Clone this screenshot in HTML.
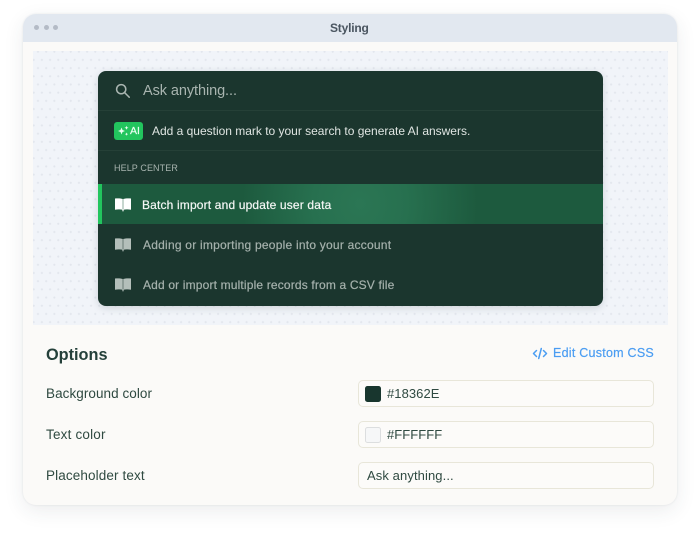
<!DOCTYPE html>
<html><head><meta charset="utf-8">
<style>
html,body{margin:0;padding:0;background:#fff;width:700px;height:537px;overflow:hidden}
body{position:relative;font-family:"Liberation Sans",sans-serif}
.a{position:absolute;white-space:nowrap}
.card{left:23px;top:14px;width:654px;height:491px;border-radius:13px;background:#fbfaf8;box-shadow:0 6px 20px rgba(40,50,70,.09),0 0 2px rgba(40,50,70,.1);overflow:hidden}
.hdr{left:23px;top:14px;width:654px;height:27.5px;background:#e2e8f0;border-radius:13px 13px 0 0}
.dot{width:5px;height:5px;border-radius:50%;background:#b4bbc6;top:25.3px}
.pat{left:33px;top:51px;width:635px;height:274px;background-color:#f1f4f9;
background-image:radial-gradient(circle,#e2e6ed .9px,transparent 1.2px),radial-gradient(circle,#e2e6ed .9px,transparent 1.2px);
background-size:8.2px 16.4px;background-position:.9px -7.5px,-3.4px .7px}
.panel{left:98px;top:71px;width:505px;height:235px;background:#1b362e;border-radius:8px;box-shadow:0 2px 8px rgba(20,40,50,.15);overflow:hidden}
.ln{left:98px;width:505px;height:1px;background:#254037}
.sel{left:98px;top:184px;width:505px;height:40px;background:radial-gradient(ellipse 118px 130px at 262px 20px,#2b7654 0%,#27704f 40%,#1d5a3e 100%) #1d5a3e}
.bar{left:98px;top:184px;width:3.5px;height:40px;background:#22c55e}
.t{font-size:12px;line-height:16px;color:#dfe5e2}
.m{-webkit-text-stroke:.2px currentColor}
.lb{font-size:13.5px;line-height:18px;color:#2f4a41}
.box{left:358px;width:294px;height:25px;border:1px solid #e8e6d9;border-radius:5px;background:#fcfbf9}
.sw{left:364.5px;width:16px;height:16px;border-radius:2.5px}
.val{font-size:13px;line-height:18px;color:#2f4a41}
</style></head><body>
<div class="a card"></div>
<div class="a hdr"></div>
<div class="a dot" style="left:34.400px"></div><div class="a dot" style="left:43.800px"></div><div class="a dot" style="left:53.200px"></div>
<div class="a" style="left:330px;top:20px;font-size:12px;line-height:16px;font-weight:bold;color:#4a5560;letter-spacing:-.2px">Styling</div>
<div class="a pat"></div>
<div class="a panel"></div>
<svg class="a" style="left:113.500px;top:81.500px" width="18" height="18" viewBox="0 0 18 18" fill="none" stroke="#aab6b1" stroke-width="1.5" stroke-linecap="round"><circle cx="7.200" cy="7.200" r="4.600"/><path d="M10.700 10.700L15.200 15.200"/></svg>
<div class="a" style="left:143px;top:81.500px;font-size:14.500px;line-height:18px;color:#a9b5b0;letter-spacing:-.08px">Ask anything...</div>
<div class="a ln" style="top:110px"></div>
<div class="a" style="left:114px;top:122px;width:29px;height:18px;border-radius:3px;background:#22c55e"></div>
<svg class="a" style="left:117px;top:125px" width="13" height="12" viewBox="0 0 13 12" fill="#eafff2"><path d="M4.500 2.500L5.500 5L8 6L5.500 7L4.500 9.500L3.500 7L1 6L3.500 5Z"/><path d="M9.500 .8L10.100 2.200L11.500 2.800L10.100 3.400L9.500 4.800L8.900 3.400L7.500 2.800L8.900 2.200Z"/><path d="M9.500 7.500L10 8.600L11.100 9.100L10 9.600L9.500 10.700L9 9.600L7.900 9.100L9 8.600Z"/></svg>
<div class="a" style="left:130px;top:124px;font-size:10.500px;line-height:14px;color:#eafff2;-webkit-text-stroke:.2px #eafff2">AI</div>
<div class="a t" style="left:152px;top:123px;letter-spacing:-.01px">Add a question mark to your search to generate AI answers.</div>
<div class="a ln" style="top:150px"></div>
<div class="a" style="left:114px;top:161.500px;font-size:9px;line-height:13px;color:#a9b5b0;letter-spacing:.1px">HELP CENTER</div>
<div class="a sel"></div><div class="a bar"></div>
<svg class="a" style="left:114px;top:197px" width="18" height="16" viewBox="0 0 18 16" fill="#fff"><path d="M1 1.500C3.500 1.200 6.500 1.200 8.750 2V12.800C6.500 12.300 3.500 12.300 1 12.800Z"/><path d="M17 1.500C14.500 1.200 11.500 1.200 9.250 2V12.800C11.500 12.300 14.500 12.300 17 12.800Z"/><path d="M8 12.500H10L9 15Z"/></svg>
<div class="a t m" style="left:142px;top:196.500px;color:#f4f7f5;letter-spacing:.16px">Batch import and update user data</div>
<svg class="a" style="left:114px;top:237px" width="18" height="16" viewBox="0 0 18 16" fill="#b4bfba"><path d="M1 1.500C3.500 1.200 6.500 1.200 8.750 2V12.800C6.500 12.300 3.500 12.300 1 12.800Z"/><path d="M17 1.500C14.500 1.200 11.500 1.200 9.250 2V12.800C11.500 12.300 14.500 12.300 17 12.800Z"/><path d="M8 12.500H10L9 15Z"/></svg>
<div class="a t m" style="left:143px;top:236.500px;color:#a5b1ac;letter-spacing:.23px">Adding or importing people into your account</div>
<svg class="a" style="left:114px;top:277px" width="18" height="16" viewBox="0 0 18 16" fill="#b4bfba"><path d="M1 1.500C3.500 1.200 6.500 1.200 8.750 2V12.800C6.500 12.300 3.500 12.300 1 12.800Z"/><path d="M17 1.500C14.500 1.200 11.500 1.200 9.250 2V12.800C11.500 12.300 14.500 12.300 17 12.800Z"/><path d="M8 12.500H10L9 15Z"/></svg>
<div class="a t m" style="left:143px;top:276.500px;color:#a5b1ac;letter-spacing:.16px">Add or import multiple records from a CSV file</div>

<div class="a" style="left:46px;top:344px;font-size:16.300px;line-height:22px;font-weight:bold;color:#24403a">Options</div>
<svg class="a" style="left:532px;top:347px" width="16" height="13" viewBox="0 0 16 13" fill="none" stroke="#4b9df2" stroke-width="1.500" stroke-linecap="round" stroke-linejoin="round"><path d="M4.500 3.500L1.500 6.500L4.500 9.500"/><path d="M11.500 3.500L14.500 6.500L11.500 9.500"/><path d="M9.300 1.500L6.700 11.500"/></svg>
<div class="a m" style="left:553px;top:345px;font-size:12.500px;line-height:17px;color:#4b9df2;letter-spacing:.25px">Edit Custom CSS</div>

<div class="a lb" style="left:46px;top:385px;letter-spacing:.06px">Background color</div>
<div class="a lb" style="left:46px;top:426px;letter-spacing:.19px">Text color</div>
<div class="a lb" style="left:46px;top:467px;letter-spacing:.12px">Placeholder text</div>

<div class="a box" style="top:380px"></div>
<div class="a sw" style="top:385.500px;background:#18362e"></div>
<div class="a val" style="left:387px;top:385px;letter-spacing:.06px">#18362E</div>
<div class="a box" style="top:421px"></div>
<div class="a sw" style="top:426.500px;background:#f6f7f8;border:1px solid #dcdedf;width:14px;height:14px"></div>
<div class="a val" style="left:387px;top:426px;letter-spacing:.06px">#FFFFFF</div>
<div class="a box" style="top:462px"></div>
<div class="a val" style="left:367px;top:467px;letter-spacing:.1px">Ask anything...</div>
</body></html>
